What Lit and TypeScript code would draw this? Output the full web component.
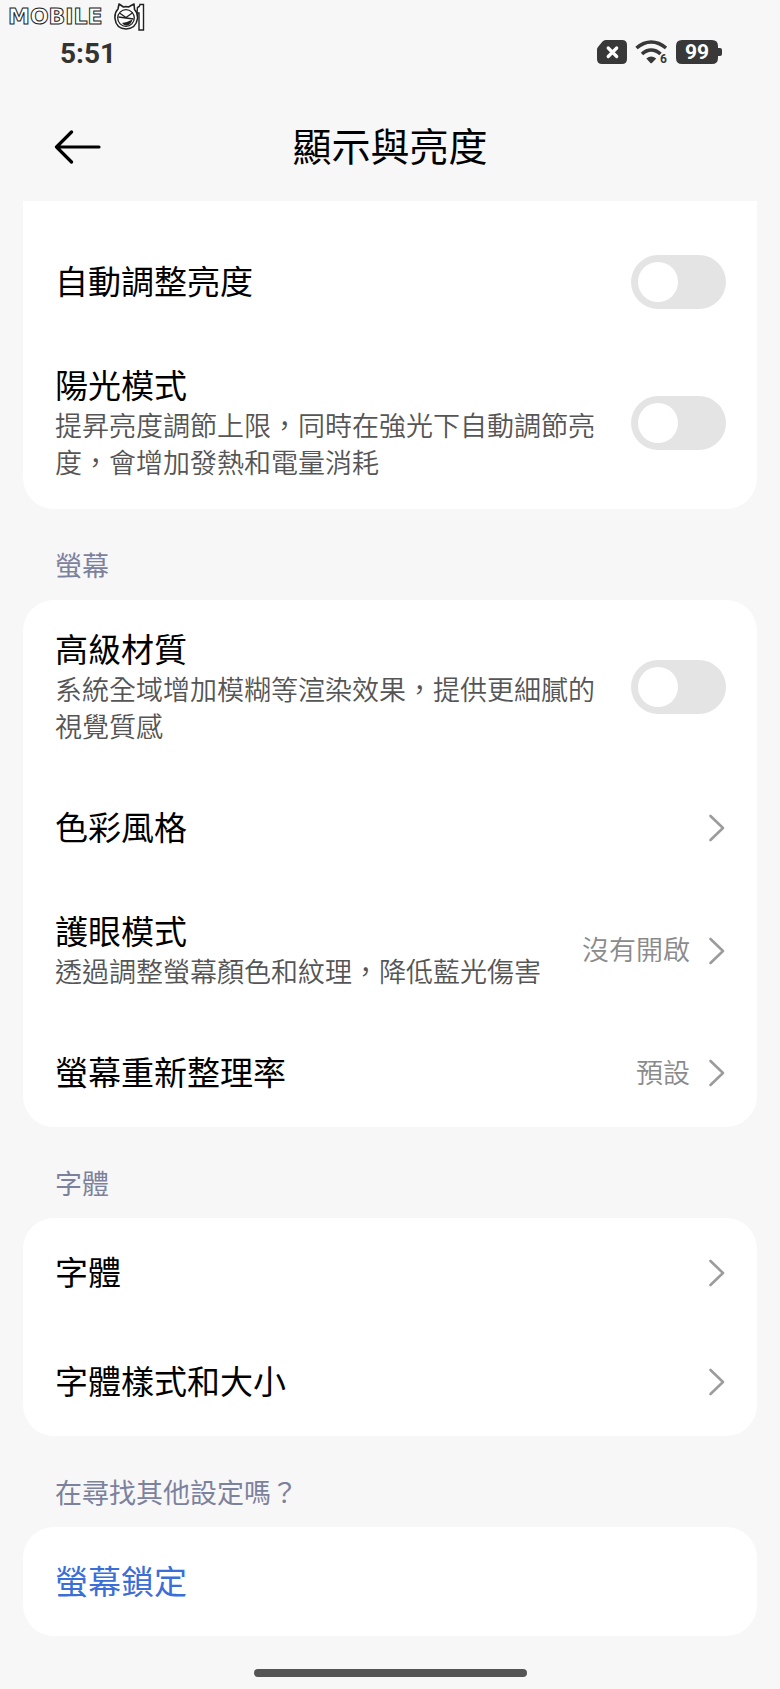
import { LitElement, html, css, nothing } from "lit";
import { customElement, property } from "lit/decorators.js";

const chevron = html`<svg class="chevron" viewBox="0 0 18 28" width="18" height="28" aria-hidden="true">
  <path d="M2.5 2 L15 14 L2.5 26" fill="none" stroke="#9c9c9c" stroke-width="2.6" stroke-linecap="round" stroke-linejoin="round" />
</svg>`;

@customElement("setting-row")
class SettingRow extends LitElement {
  @property() heading = "";
  @property() description = "";
  @property() value = "";
  @property() kind: "switch" | "nav" | "link" = "nav";

  static styles = css`
    :host {
      display: block;
    }
    .row {
      display: flex;
      align-items: center;
      gap: 18px;
      box-sizing: border-box;
      min-height: 109px;
      padding: 28px 31px 27px 32px;
      color: #000;
      text-decoration: none;
    }
    .text {
      flex: 1;
      min-width: 0;
      padding-bottom: 2px;
    }
    .heading {
      display: block;
      padding-bottom: 2px;
      font-size: 33px;
      line-height: 40px;
      font-weight: 400;
    }
    .link .heading {
      color: #3a6fd8;
    }
    .description {
      display: block;
      font-size: 27px;
      line-height: 37px;
      font-weight: 350;
      color: #555;
    }
    .value {
      padding-bottom: 4px;
      font-size: 27px;
      line-height: 37px;
      font-weight: 350;
      color: #8a8a8a;
      white-space: nowrap;
    }
    .chevron {
      display: block;
      flex: none;
    }
    .switch {
      appearance: none;
      flex: none;
      box-sizing: border-box;
      width: 95px;
      height: 54px;
      margin: 0;
      padding: 7px;
      border-radius: 27px;
      background: #e4e4e4;
    }
    .switch::before {
      content: "";
      display: block;
      width: 40px;
      height: 40px;
      border-radius: 50%;
      background: #fff;
    }
    .switch:checked {
      background: #3a6fd8;
    }
    .switch:checked::before {
      margin-left: auto;
    }
  `;

  render() {
    const text = html`<span class="text">
      <span class="heading">${this.heading}</span>
      ${this.description ? html`<span class="description">${this.description}</span>` : nothing}
    </span>`;
    if (this.kind === "switch") {
      return html`<label class="row">${text}<input class="switch" type="checkbox" role="switch" /></label>`;
    }
    return html`<a class="row ${this.kind}" href="#">
      ${text}
      ${this.value ? html`<span class="value">${this.value}</span>` : nothing}
      ${this.kind === "nav" ? chevron : nothing}
    </a>`;
  }
}

interface Item {
  heading: string;
  description?: string;
  value?: string;
  kind?: "switch" | "nav" | "link";
}

const groups: { title?: string; items: Item[] }[] = [
  {
    items: [
      { heading: "自動調整亮度", kind: "switch" },
      {
        heading: "陽光模式",
        description: "提昇亮度調節上限，同時在強光下自動調節亮度，會增加發熱和電量消耗",
        kind: "switch",
      },
    ],
  },
  {
    title: "螢幕",
    items: [
      {
        heading: "高級材質",
        description: "系統全域增加模糊等渲染效果，提供更細膩的視覺質感",
        kind: "switch",
      },
      { heading: "色彩風格" },
      { heading: "護眼模式", description: "透過調整螢幕顏色和紋理，降低藍光傷害", value: "沒有開啟" },
      { heading: "螢幕重新整理率", value: "預設" },
    ],
  },
  { title: "字體", items: [{ heading: "字體" }, { heading: "字體樣式和大小" }] },
  { title: "在尋找其他設定嗎？", items: [{ heading: "螢幕鎖定", kind: "link" }] },
];

@customElement("app-root")
class AppRoot extends LitElement {
  static styles = css`
    :host {
      display: flex;
      flex-direction: column;
      min-height: 100vh;
      background: #f7f7f7;
      font-family: "Noto Sans CJK TC", sans-serif;
      color: #000;
    }
    .brand {
      display: flex;
      align-items: center;
      height: 34px;
      padding-left: 8px;
      gap: 10px;
    }
    .wordmark {
      font: 700 22px/26px "DejaVu Sans", sans-serif;
      color: #fff;
      -webkit-text-stroke: 1px #222;
    }
    .status {
      display: flex;
      align-items: center;
      height: 35px;
      padding: 0 58px 0 60px;
      gap: 8px;
      color: #333;
    }
    .time {
      margin-right: auto;
      padding-top: 4px;
      font: 700 28px/35px Roboto, sans-serif;
    }
    .status svg,
    .brand svg,
    .back svg {
      display: block;
    }
    .header {
      display: grid;
      grid-template-columns: 1fr auto 1fr;
      align-items: center;
      box-sizing: border-box;
      height: 132px;
      padding: 18px 54px 0;
    }
    .back {
      justify-self: start;
      margin: 6px 0 0;
      padding: 0;
      border: 0;
      background: none;
      color: #000;
    }
    .title {
      margin: 0;
      font-size: 39px;
      line-height: 52px;
      font-weight: 400;
    }
    .list {
      padding: 0 23px;
    }
    .card {
      background: #fff;
      border-radius: 31px;
      overflow: hidden;
    }
    .card.scrolled {
      padding-top: 26px;
      border-radius: 0 0 31px 31px;
    }
    .label {
      margin: 0;
      padding: 37px 32px 17px;
      font-size: 27px;
      line-height: 37px;
      font-weight: 400;
      color: #7c829e;
    }
    .home {
      width: 35%;
      height: 8px;
      margin: 33px auto 11px;
      border-radius: 4px;
      background: #555;
    }
  `;

  render() {
    return html`
      <div class="brand">
        <span class="wordmark">MOBILE</span>
        <svg width="32" height="28" viewBox="0 0 32 28" aria-hidden="true">
          <path d="M24.5 4.5 Q27 3.5 27 1.5 H30.5 V27 H26 V10 H24 Z" fill="#fff" stroke="#222" stroke-width="1.4" />
          <path d="M5 6 L6 1 L10.5 4 Q13 3.3 15.5 4 L21 1 L21.5 6.5 Q25 10 24.5 15.5 Q23 25.5 13 26 Q3 25.5 2 15.5 Q1.5 9.5 5 6 Z" fill="#fff" stroke="#222" stroke-width="1.6" stroke-linejoin="round" />
          <circle cx="13" cy="15" r="8.3" fill="#fff" stroke="#222" stroke-width="1.3" />
          <path d="M6.5 10 L13 14.5 L20 9.5 M5.5 14 L20.5 16" fill="none" stroke="#222" stroke-width="1.3" />
          <path d="M9 20 Q14 19.5 19.5 16.5 Q18 22.5 13 22.5 Q10.5 22 9 20 Z" fill="#222" />
        </svg>
      </div>
      <div class="status">
        <span class="time">5:51</span>
        <svg width="30" height="24" viewBox="0 0 30 24" role="img" aria-label="無 SIM 卡">
          <path d="M8.5 0 H25 Q30 0 30 5 V19 Q30 24 25 24 H5 Q0 24 0 19 V9.5 Q0 8 1.2 6.8 L5.5 1.5 Q7 0 8.5 0 Z" fill="#383838" />
          <path d="M11.2 8 L19.7 16.5 M19.7 8 L11.2 16.5" stroke="#fff" stroke-width="3.2" stroke-linecap="round" />
        </svg>
        <svg width="33" height="26" viewBox="0 0 33 26" role="img" aria-label="Wi-Fi 6">
          <g fill="none" stroke="#383838" stroke-width="3.6">
            <path d="M1.5 9 Q8.5 3 16.2 3 Q24 3 31 9" />
            <path d="M7 15 Q11.2 11 16.2 11 Q21.2 11 25.5 15" />
          </g>
          <path d="M11.3 19.5 Q16.2 15.5 21.2 19.5 L17.2 23.7 Q16.2 24.7 15.2 23.7 Z" fill="#383838" />
          <text x="25" y="24" font-family="Roboto, sans-serif" font-weight="700" font-size="12" fill="#383838">6</text>
        </svg>
        <svg width="46" height="24" viewBox="0 0 46 24" role="img" aria-label="電量 99">
          <path d="M6 0 H36 Q42 0 42 6 V8 H44 Q46 8 46 10 V14 Q46 16 44 16 H42 V18 Q42 24 36 24 H6 Q0 24 0 18 V6 Q0 0 6 0 Z" fill="#383838" />
          <text x="21" y="19" text-anchor="middle" font-family="Roboto, sans-serif" font-weight="700" font-size="21" fill="#fff">99</text>
        </svg>
      </div>
      <header class="header">
        <button class="back" aria-label="返回">
          <svg width="48" height="34" viewBox="0 0 48 34" aria-hidden="true">
            <path d="M17.5 2 L2.5 17 L17.5 32 M2.5 17 H45" fill="none" stroke="currentColor" stroke-width="3.2" stroke-linecap="round" stroke-linejoin="round" />
          </svg>
        </button>
        <h1 class="title">顯示與亮度</h1>
      </header>
      <main class="list">
        ${groups.map(
          (group) => html`
            ${group.title ? html`<h2 class="label">${group.title}</h2>` : nothing}
            <section class="card ${group.title ? "" : "scrolled"}">
              ${group.items.map(
                (item) => html`<setting-row
                  .heading=${item.heading}
                  .description=${item.description ?? ""}
                  .value=${item.value ?? ""}
                  .kind=${item.kind ?? "nav"}
                ></setting-row>`
              )}
            </section>
          `
        )}
      </main>
      <div class="home"></div>
    `;
  }
}
